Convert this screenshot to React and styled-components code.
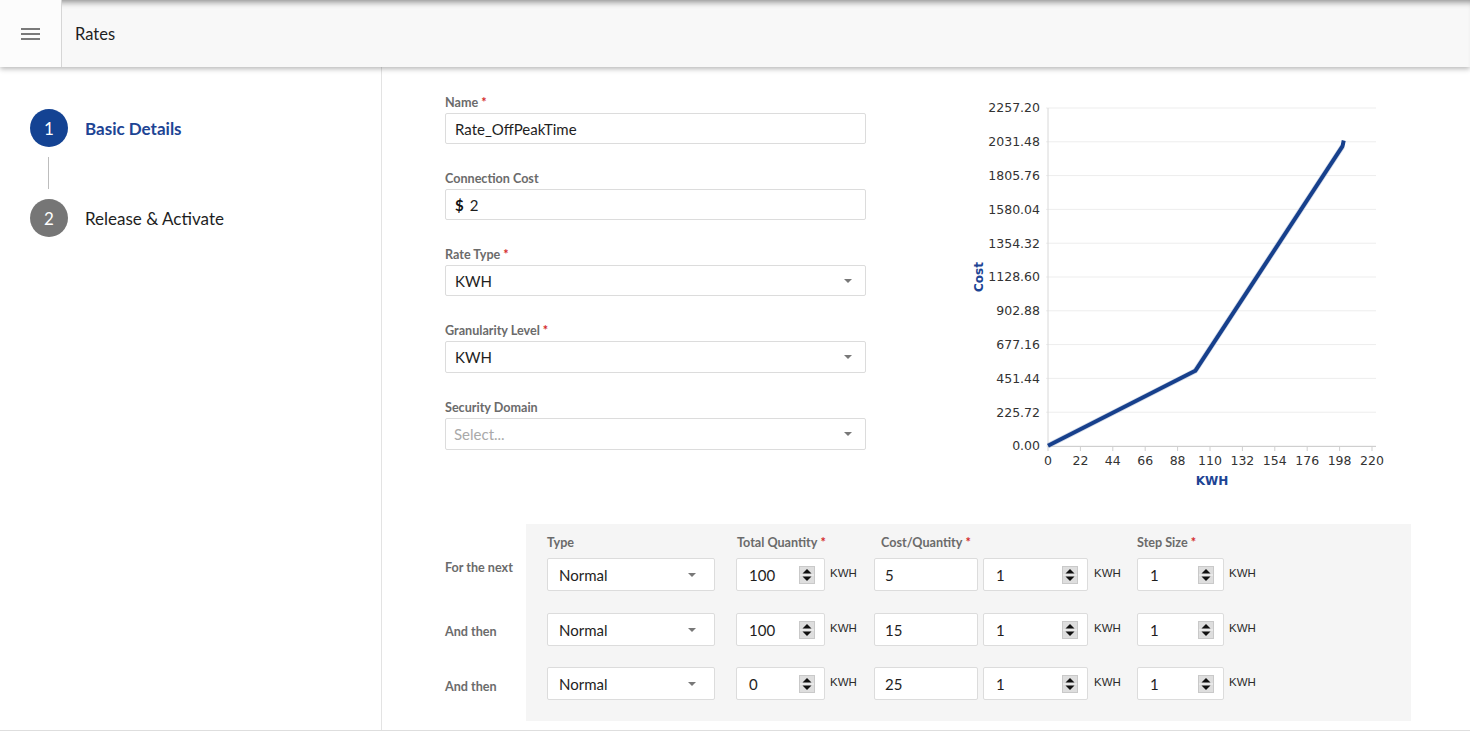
import React from "react"
import styled, { createGlobalStyle } from "styled-components"

const Global = createGlobalStyle`
body{margin:0;background:#fff;font-family:Lato,"Noto Sans",sans-serif;color:#1e1e1e;}
*{box-sizing:border-box;}
`
const Page = styled.div`
width:1470px;
height:732px;
display:flex;
flex-direction:column;
overflow:hidden;`
const Header = styled.header`
height:67px;
flex:none;
display:flex;
background:#f8f8f8;
box-shadow:inset 0 7px 6px -5px rgba(0,0,0,.45),0 2px 5px rgba(0,0,0,.28);
position:relative;
z-index:2;`
const MenuCell = styled.div`
width:62px;
border-right:1px solid #d6d6d6;
background:#fcfcfc;
display:flex;
flex-direction:column;
justify-content:center;
align-items:center;
gap:3px;
span{display:block;width:19px;height:2px;background:#7a7a7a;}`
const Title = styled.div`
display:flex;
align-items:center;
padding-left:13px;
font-size:16.5px;
color:#1e1e1e;`
const Body = styled.div`
height:664px;
display:flex;
border-bottom:1px solid #dedede;`
const Sidebar = styled.aside`
width:382px;
flex:none;
border-right:1px solid #e3e3e3;
padding:42px 0 0 30px;`
const Step = styled.div`
display:flex;
align-items:center;
gap:17px;
font-size:17px;
font-weight:${p=>p.active?700:400};
color:${p=>p.active?"#1d4494":"#1e1e1e"};`
const Circle = styled.div`
width:38px;
height:38px;
border-radius:50%;
background:${p=>p.active?"#144393":"#767676"};
color:#fff;
font-weight:400;
display:flex;
align-items:center;
justify-content:center;
font-size:17px;`
const Connector = styled.div`
width:1px;
height:32px;
margin:10px 0 10px 18px;
background:#bdbdbd;`
const Main = styled.main`
flex:1;
padding:29px 0 0 63px;`
const TopRow = styled.div`
display:flex;`
const FormCol = styled.div`
width:421px;
display:flex;
flex-direction:column;
gap:28px;`
const Field = styled.div`
display:flex;
flex-direction:column;`
const Label = styled.label`
font-size:12.6px;
line-height:14px;
font-weight:700;
color:#6b6b6b;
margin-bottom:3px;`
const Req = styled.span`
color:#d42a2a;
margin-left:3px;`
const Box = styled.div`
height:${p=>p.h||31}px;
width:${p=>p.w?p.w+"px":"100%"};
border:1px solid #dcdcdc;
border-radius:2px;
background:#fff;
display:flex;
align-items:center;
padding:0 ${p=>p.pr||12}px 0 ${p=>p.pl||9}px;
font-size:15px;
color:${p=>p.muted?"#a9a9a9":"#1e1e1e"};
flex:none;`
const Value = styled.span`
flex:1;
white-space:nowrap;`
const Dollar = styled.b`
font-size:15px;
margin-right:6px;
color:#111;`
const Caret = styled.i`
width:0;
height:0;
border-left:4px solid transparent;
border-right:4px solid transparent;
border-top:4px solid #787878;`
const Chart = styled.svg`
margin-left:94px;
flex:none;
font-family:"DejaVu Sans",Verdana,sans-serif;`
const TableArea = styled.div`
display:flex;
margin-top:28px;`
const RowLabels = styled.div`
width:81px;
padding-top:34px;
display:flex;
flex-direction:column;`
const RowLabel = styled.div`
height:${p=>p.h}px;
padding-top:${p=>p.off}px;
font-size:12.6px;
line-height:14px;
font-weight:700;
color:#6b6b6b;`
const Panel = styled.div`
width:885px;
background:#f5f5f5;
padding:10px 0 21px 21px;
display:flex;
flex-direction:column;`
const Grid = styled.div`
display:grid;
grid-template-columns:189px 138px 263px 1fr;
height:${p=>p.h}px;
margin-top:${p=>p.mt||0}px;
align-items:${p=>p.head?"start":"center"};`
const Head = styled.div`
font-size:12.6px;
line-height:14px;
font-weight:700;
color:#6b6b6b;
padding-top:2px;
padding-left:${p=>p.pl||0}px;`
const Cell = styled.div`
display:flex;
align-items:center;`
const Unit = styled.span`
font-family:"Liberation Sans",Arial,sans-serif;
font-size:11.5px;
color:#2b2b2b;
margin-left:${p=>p.ml||5}px;
margin-top:-4px;`

const Spinner=()=>(
    <svg width="16" height="18" viewBox="0 0 16 18">
        <rect x="0.5" y="0.5" width="15" height="17" fill="#dedede" stroke="#c9c9c9"/>
        <line x1="1" y1="9" x2="15" y2="9" stroke="#f4f4f4"/>
        <polygon points="3.5,7.5 12.5,7.5 8,3" fill="#111"/>
        <polygon points="3.5,10.5 12.5,10.5 8,15" fill="#111"/>
    </svg>
)

const NumBox=({w,v})=>(
    <Box w={w} h={33} pr={9} pl={12}><Value>{v}</Value><Spinner/></Box>
)

const TypeSelect=()=>(
    <Box w={168} h={33} pl={11} pr={18}><Value>Normal</Value><Caret/></Box>
)

const rows=[
    {qty:"100",cost:"5"},
    {qty:"100",cost:"15"},
    {qty:"0",cost:"25"},
]

const yTicks=Array.from({length:11},(_,i)=>i)
const xTicks=Array.from({length:11},(_,i)=>i*22)
const px=v=>88+v*(324/220)
const py=c=>350-c*(338/2257.2)

const CostChart=()=>{
    const pts=[[0,2],[100,502],[200,2002]].map(([x,c])=>`${px(x)},${py(c)}`).join(" ")
    return(
        <Chart width="440" height="400">
            {yTicks.map(i=>(
                <g key={i}>
                    <line x1="86" x2="416" y1={350-i*33.8} y2={350-i*33.8} stroke="#ededed"/>
                    <text x="80" y={350-i*33.8} dy="0.35em" textAnchor="end" fontSize="12.5" fill="#333">{(i*225.72).toFixed(2)}</text>
                </g>
            ))}
            <line x1="88" x2="88" y1="12" y2="350" stroke="#d8d8d8"/>
            <line x1="88" x2="416" y1="350.5" y2="350.5" stroke="#cfcfcf"/>
            {xTicks.map(v=>(
                <g key={v}>
                    <line x1={px(v)} x2={px(v)} y1="350" y2="355" stroke="#cfcfcf"/>
                    <text x={px(v)} y="369" textAnchor="middle" fontSize="12.5" fill="#333">{v}</text>
                </g>
            ))}
            <polyline points={pts} fill="none" stroke="#9fb0d0" strokeWidth="5.5" strokeLinejoin="round" opacity="0.45"/>
            <polyline points={pts+` ${px(200.8)},${py(2040)}`} fill="none" stroke="#17408c" strokeWidth="4" strokeLinejoin="round"/>
            <text x="252" y="389" textAnchor="middle" fontSize="12" fontWeight="700" fill="#1d4494">KWH</text>
            <text transform="translate(23,181) rotate(-90)" textAnchor="middle" fontSize="12" fontWeight="700" fill="#1d4494">Cost</text>
        </Chart>
    )
}

const App=()=>{
    return(
        <Page>
            <Global/>
            <Header>
                <MenuCell><span/><span/><span/></MenuCell>
                <Title>Rates</Title>
            </Header>
            <Body>
                <Sidebar>
                    <Step active><Circle active>1</Circle>Basic Details</Step>
                    <Connector/>
                    <Step><Circle>2</Circle>Release &amp; Activate</Step>
                </Sidebar>
                <Main>
                    <TopRow>
                        <FormCol>
                            <Field>
                                <Label>Name<Req>*</Req></Label>
                                <Box><Value>Rate_OffPeakTime</Value></Box>
                            </Field>
                            <Field>
                                <Label>Connection Cost</Label>
                                <Box><Dollar>$</Dollar><Value>2</Value></Box>
                            </Field>
                            <Field>
                                <Label>Rate Type<Req>*</Req></Label>
                                <Box pr={13}><Value>KWH</Value><Caret/></Box>
                            </Field>
                            <Field>
                                <Label>Granularity Level<Req>*</Req></Label>
                                <Box h={32} pr={13}><Value>KWH</Value><Caret/></Box>
                            </Field>
                            <Field>
                                <Label>Security Domain</Label>
                                <Box h={32} pr={13} pl={8} muted><Value>Select...</Value><Caret/></Box>
                            </Field>
                        </FormCol>
                        <CostChart/>
                    </TopRow>
                    <TableArea>
                        <RowLabels>
                            <RowLabel h={55} off={3}>For the next</RowLabel>
                            <RowLabel h={54} off={12}>And then</RowLabel>
                            <RowLabel h={33} off={13}>And then</RowLabel>
                        </RowLabels>
                        <Panel>
                            <Grid head h={24}>
                                <Head>Type</Head>
                                <Head pl={1}>Total Quantity<Req>*</Req></Head>
                                <Head pl={7}>Cost/Quantity<Req>*</Req></Head>
                                <Head>Step Size<Req>*</Req></Head>
                            </Grid>
                            {rows.map((r,i)=>(
                                <Grid key={i} h={33} mt={i===0?0:i===1?22:21}>
                                    <Cell><TypeSelect/></Cell>
                                    <Cell><NumBox w={89} v={r.qty}/><Unit>KWH</Unit></Cell>
                                    <Cell>
                                        <Box w={104} h={33} pl={10}><Value>{r.cost}</Value></Box>
                                        <span style={{width:5}}/>
                                        <NumBox w={105} v="1"/>
                                        <Unit ml={6}>KWH</Unit>
                                    </Cell>
                                    <Cell><NumBox w={87} v="1"/><Unit>KWH</Unit></Cell>
                                </Grid>
                            ))}
                        </Panel>
                    </TableArea>
                </Main>
            </Body>
        </Page>
    )
}
export default App
